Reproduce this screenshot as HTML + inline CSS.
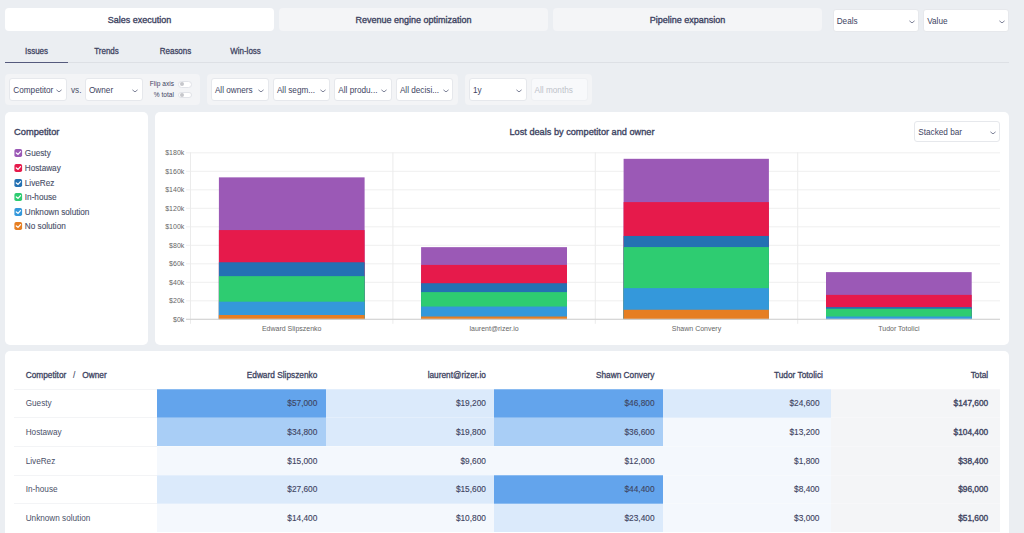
<!DOCTYPE html>
<html><head><meta charset="utf-8">
<style>
*{box-sizing:border-box;margin:0;padding:0}
html,body{width:1024px;height:533px;overflow:hidden;background:#EBEEF2;font-family:"Liberation Sans",sans-serif;color:#3E4462}
.a{position:absolute;white-space:nowrap}
.seg{position:absolute;top:8px;height:23px;width:269px;border-radius:4px;background:#F4F5F7;text-align:center;padding-top:1px;line-height:23px;font-weight:400;font-size:9px;-webkit-text-stroke:0.35px #3E4462;color:#3E4462}
.dd{position:absolute;background:#fff;border:1px solid #E6E8EC;border-radius:3px;font-size:8.2px;color:#3E4462;white-space:nowrap;overflow:hidden}
.dd span{position:absolute;left:3px;top:1.5px}
.chev{position:absolute}
.tab{position:absolute;top:43.2px;height:16px;line-height:16px;font-size:8.7px;transform:scaleX(0.92);font-weight:400;-webkit-text-stroke:0.3px #3E4462;text-align:center;color:#3E4462}
.box{position:absolute;background:#F3F4F6;border-radius:4px}
.card{position:absolute;background:#fff;border-radius:5px}
</style></head><body>
<div class="seg" style="left:5px;background:#fff">Sales execution</div><div class="seg" style="left:279px">Revenue engine optimization</div><div class="seg" style="left:553px">Pipeline expansion</div>
<div class="dd" style="left:832.70px;top:9.20px;width:86.50px;height:22.60px;line-height:20.60px;"><span style="top:1.50px">Deals</span><svg class="chev" style="left:74.90px;top:9.70px" width="6" height="4" viewBox="0 0 6 4"><path d="M0.7 1.1L3 2.9L5.3 1.1" fill="none" stroke="#80859A" stroke-width="1" stroke-linecap="round" stroke-linejoin="round"/></svg></div>
<div class="dd" style="left:923.20px;top:9.20px;width:86.00px;height:22.60px;line-height:20.60px;"><span style="top:1.50px">Value</span><svg class="chev" style="left:74.80px;top:9.70px" width="6" height="4" viewBox="0 0 6 4"><path d="M0.7 1.1L3 2.9L5.3 1.1" fill="none" stroke="#80859A" stroke-width="1" stroke-linecap="round" stroke-linejoin="round"/></svg></div>
<div class="tab" style="left:5px;width:63px">Issues</div><div class="tab" style="left:75px;width:63px">Trends</div><div class="tab" style="left:144px;width:63px">Reasons</div><div class="tab" style="left:214px;width:63px">Win-loss</div><div class="a" style="left:5px;top:62px;width:1004px;height:1px;background:#DDE0E5"></div><div class="a" style="left:5px;top:61.7px;width:63px;height:1.4px;background:#555A7D"></div>
<div class="box" style="left:5px;top:74px;width:195px;height:31px"></div><div class="box" style="left:207px;top:74px;width:251px;height:31px"></div><div class="box" style="left:465px;top:74px;width:127px;height:31px"></div>
<div class="dd" style="left:9.30px;top:77.80px;width:57.40px;height:22.90px;line-height:20.90px;"><span style="top:2.20px">Competitor</span><svg class="chev" style="left:46.20px;top:9.85px" width="6" height="4" viewBox="0 0 6 4"><path d="M0.7 1.1L3 2.9L5.3 1.1" fill="none" stroke="#80859A" stroke-width="1" stroke-linecap="round" stroke-linejoin="round"/></svg></div>
<div class="a" style="left:71px;top:80px;height:21.5px;line-height:21.5px;font-size:8.2px;color:#4A5068">vs.</div>
<div class="dd" style="left:85.00px;top:77.80px;width:57.90px;height:22.90px;line-height:20.90px;"><span style="top:2.20px">Owner</span><svg class="chev" style="left:46.40px;top:9.85px" width="6" height="4" viewBox="0 0 6 4"><path d="M0.7 1.1L3 2.9L5.3 1.1" fill="none" stroke="#80859A" stroke-width="1" stroke-linecap="round" stroke-linejoin="round"/></svg></div>
<div class="a" style="left:140px;width:34px;text-align:right;top:80.3px;height:8px;line-height:8px;font-size:6.6px">Flip axis</div>
<div class="a" style="left:140px;width:34px;text-align:right;top:90.8px;height:8px;line-height:8px;font-size:6.6px">% total</div>
<div class="a" style="left:178px;top:81px;width:13.5px;height:6.5px;border-radius:4px;background:#fff;border:0.7px solid #E1E3E8"></div><div class="a" style="left:179.6px;top:82px;width:4.4px;height:4.4px;border-radius:50%;background:#C6C7CB"></div>
<div class="a" style="left:178px;top:91.5px;width:13.5px;height:6.5px;border-radius:4px;background:#fff;border:0.7px solid #E1E3E8"></div><div class="a" style="left:179.6px;top:92.5px;width:4.4px;height:4.4px;border-radius:50%;background:#C6C7CB"></div>
<div class="dd" style="left:210.90px;top:77.80px;width:57.80px;height:22.90px;line-height:20.90px;"><span style="top:2.20px">All owners</span><svg class="chev" style="left:46.40px;top:9.85px" width="6" height="4" viewBox="0 0 6 4"><path d="M0.7 1.1L3 2.9L5.3 1.1" fill="none" stroke="#80859A" stroke-width="1" stroke-linecap="round" stroke-linejoin="round"/></svg></div>
<div class="dd" style="left:272.90px;top:77.80px;width:57.10px;height:22.90px;line-height:20.90px;"><span style="top:2.20px">All segm...</span><svg class="chev" style="left:45.80px;top:9.85px" width="6" height="4" viewBox="0 0 6 4"><path d="M0.7 1.1L3 2.9L5.3 1.1" fill="none" stroke="#80859A" stroke-width="1" stroke-linecap="round" stroke-linejoin="round"/></svg></div>
<div class="dd" style="left:334.30px;top:77.80px;width:57.50px;height:22.90px;line-height:20.90px;"><span style="top:2.20px">All produ...</span><svg class="chev" style="left:46.20px;top:9.85px" width="6" height="4" viewBox="0 0 6 4"><path d="M0.7 1.1L3 2.9L5.3 1.1" fill="none" stroke="#80859A" stroke-width="1" stroke-linecap="round" stroke-linejoin="round"/></svg></div>
<div class="dd" style="left:395.90px;top:77.80px;width:57.60px;height:22.90px;line-height:20.90px;"><span style="top:2.20px">All decisi...</span><svg class="chev" style="left:46.10px;top:9.85px" width="6" height="4" viewBox="0 0 6 4"><path d="M0.7 1.1L3 2.9L5.3 1.1" fill="none" stroke="#80859A" stroke-width="1" stroke-linecap="round" stroke-linejoin="round"/></svg></div>
<div class="dd" style="left:468.90px;top:77.80px;width:57.70px;height:22.90px;line-height:20.90px;"><span style="top:2.20px">1y</span><svg class="chev" style="left:46.00px;top:9.85px" width="6" height="4" viewBox="0 0 6 4"><path d="M0.7 1.1L3 2.9L5.3 1.1" fill="none" stroke="#80859A" stroke-width="1" stroke-linecap="round" stroke-linejoin="round"/></svg></div>
<div class="dd" style="left:530.60px;top:77.80px;width:57.50px;height:22.90px;line-height:20.90px;background:#F8F9FB;color:#BEC2CA;border-color:#EEF0F3"><span style="top:2.20px">All months</span></div>
<div class="card" style="left:5px;top:112px;width:143px;height:233px"></div>
<div class="card" style="left:155px;top:112px;width:854px;height:233px"></div>
<div class="card" style="left:5px;top:351px;width:1004px;height:200px"></div>
<div class="a" style="left:14px;top:126px;height:12px;line-height:12px;font-size:9.3px;font-weight:400;-webkit-text-stroke:0.35px #3E4462;color:#3E4462">Competitor</div>
<svg class="a" style="left:0;top:148.30px" width="30" height="10" viewBox="0 148.30 30 10"><rect x="14.4" y="149.35" width="7.7" height="7.9" rx="1.8" fill="#9B59B6"/><path d="M16.3 153.25L18 154.65L20.5 151.95" fill="none" stroke="#fff" stroke-width="1.3" stroke-linecap="round" stroke-linejoin="round"/></svg><div class="a" style="left:24.8px;top:148.30px;height:12px;line-height:12px;font-size:8.2px;-webkit-text-stroke:0.12px #4A5068;color:#4A5068">Guesty</div>
<svg class="a" style="left:0;top:162.90px" width="30" height="10" viewBox="0 162.90 30 10"><rect x="14.4" y="163.95" width="7.7" height="7.9" rx="1.8" fill="#E61A4B"/><path d="M16.3 167.85L18 169.25L20.5 166.55" fill="none" stroke="#fff" stroke-width="1.3" stroke-linecap="round" stroke-linejoin="round"/></svg><div class="a" style="left:24.8px;top:162.90px;height:12px;line-height:12px;font-size:8.2px;-webkit-text-stroke:0.12px #4A5068;color:#4A5068">Hostaway</div>
<svg class="a" style="left:0;top:177.50px" width="30" height="10" viewBox="0 177.50 30 10"><rect x="14.4" y="178.55" width="7.7" height="7.9" rx="1.8" fill="#2471B3"/><path d="M16.3 182.45L18 183.85L20.5 181.15" fill="none" stroke="#fff" stroke-width="1.3" stroke-linecap="round" stroke-linejoin="round"/></svg><div class="a" style="left:24.8px;top:177.50px;height:12px;line-height:12px;font-size:8.2px;-webkit-text-stroke:0.12px #4A5068;color:#4A5068">LiveRez</div>
<svg class="a" style="left:0;top:192.10px" width="30" height="10" viewBox="0 192.10 30 10"><rect x="14.4" y="193.15" width="7.7" height="7.9" rx="1.8" fill="#2ECC71"/><path d="M16.3 197.05L18 198.45L20.5 195.75" fill="none" stroke="#fff" stroke-width="1.3" stroke-linecap="round" stroke-linejoin="round"/></svg><div class="a" style="left:24.8px;top:192.10px;height:12px;line-height:12px;font-size:8.2px;-webkit-text-stroke:0.12px #4A5068;color:#4A5068">In-house</div>
<svg class="a" style="left:0;top:206.70px" width="30" height="10" viewBox="0 206.70 30 10"><rect x="14.4" y="207.75" width="7.7" height="7.9" rx="1.8" fill="#3498DB"/><path d="M16.3 211.65L18 213.05L20.5 210.35" fill="none" stroke="#fff" stroke-width="1.3" stroke-linecap="round" stroke-linejoin="round"/></svg><div class="a" style="left:24.8px;top:206.70px;height:12px;line-height:12px;font-size:8.2px;-webkit-text-stroke:0.12px #4A5068;color:#4A5068">Unknown solution</div>
<svg class="a" style="left:0;top:221.30px" width="30" height="10" viewBox="0 221.30 30 10"><rect x="14.4" y="222.35" width="7.7" height="7.9" rx="1.8" fill="#E67E22"/><path d="M16.3 226.25L18 227.65L20.5 224.95" fill="none" stroke="#fff" stroke-width="1.3" stroke-linecap="round" stroke-linejoin="round"/></svg><div class="a" style="left:24.8px;top:221.30px;height:12px;line-height:12px;font-size:8.2px;-webkit-text-stroke:0.12px #4A5068;color:#4A5068">No solution</div>
<svg class="a" style="left:0;top:0" width="1024" height="533" viewBox="0 0 1024 533"><rect x="186" y="300.30" width="814" height="1" fill="#EFEFEF"/><rect x="186" y="281.80" width="814" height="1" fill="#EFEFEF"/><rect x="186" y="263.30" width="814" height="1" fill="#EFEFEF"/><rect x="186" y="244.80" width="814" height="1" fill="#EFEFEF"/><rect x="186" y="226.30" width="814" height="1" fill="#EFEFEF"/><rect x="186" y="207.80" width="814" height="1" fill="#EFEFEF"/><rect x="186" y="189.30" width="814" height="1" fill="#EFEFEF"/><rect x="186" y="170.80" width="814" height="1" fill="#EFEFEF"/><rect x="186" y="152.30" width="814" height="1" fill="#EFEFEF"/><rect x="190.00" y="152.3" width="1" height="171.5" fill="#EBEBEB"/><rect x="392.40" y="152.3" width="1" height="171.5" fill="#EBEBEB"/><rect x="594.80" y="152.3" width="1" height="171.5" fill="#EBEBEB"/><rect x="797.20" y="152.3" width="1" height="171.5" fill="#EBEBEB"/><text x="184.3" y="321.70" text-anchor="end" font-size="7" fill="#666">$0k</text><text x="184.3" y="303.20" text-anchor="end" font-size="7" fill="#666">$20k</text><text x="184.3" y="284.70" text-anchor="end" font-size="7" fill="#666">$40k</text><text x="184.3" y="266.20" text-anchor="end" font-size="7" fill="#666">$60k</text><text x="184.3" y="247.70" text-anchor="end" font-size="7" fill="#666">$80k</text><text x="184.3" y="229.20" text-anchor="end" font-size="7" fill="#666">$100k</text><text x="184.3" y="210.70" text-anchor="end" font-size="7" fill="#666">$120k</text><text x="184.3" y="192.20" text-anchor="end" font-size="7" fill="#666">$140k</text><text x="184.3" y="173.70" text-anchor="end" font-size="7" fill="#666">$160k</text><text x="184.3" y="155.20" text-anchor="end" font-size="7" fill="#666">$180k</text><rect x="218.9" y="177.36" width="145.70" height="141.94" fill="#9B59B6"/><rect x="218.9" y="230.08" width="145.70" height="89.22" fill="#E61A4B"/><rect x="218.9" y="262.27" width="145.70" height="57.03" fill="#2471B3"/><rect x="218.9" y="276.15" width="145.70" height="43.15" fill="#2ECC71"/><rect x="218.9" y="301.68" width="145.70" height="17.62" fill="#3498DB"/><rect x="218.9" y="315.00" width="145.70" height="4.30" fill="#E67E22"/><rect x="421.1" y="247.15" width="145.90" height="72.15" fill="#9B59B6"/><rect x="421.1" y="264.91" width="145.90" height="54.39" fill="#E61A4B"/><rect x="421.1" y="283.23" width="145.90" height="36.07" fill="#2471B3"/><rect x="421.1" y="292.11" width="145.90" height="27.19" fill="#2ECC71"/><rect x="421.1" y="306.54" width="145.90" height="12.76" fill="#3498DB"/><rect x="421.1" y="316.53" width="145.90" height="2.77" fill="#E67E22"/><rect x="623.6" y="158.81" width="145.30" height="160.49" fill="#9B59B6"/><rect x="623.6" y="202.10" width="145.30" height="117.20" fill="#E61A4B"/><rect x="623.6" y="235.96" width="145.30" height="83.34" fill="#2471B3"/><rect x="623.6" y="247.06" width="145.30" height="72.24" fill="#2ECC71"/><rect x="623.6" y="288.13" width="145.30" height="31.17" fill="#3498DB"/><rect x="623.6" y="309.77" width="145.30" height="9.53" fill="#E67E22"/><rect x="826" y="272.12" width="145.70" height="47.18" fill="#9B59B6"/><rect x="826" y="294.88" width="145.70" height="24.42" fill="#E61A4B"/><rect x="826" y="307.09" width="145.70" height="12.21" fill="#2471B3"/><rect x="826" y="308.75" width="145.70" height="10.55" fill="#2ECC71"/><rect x="826" y="316.53" width="145.70" height="2.77" fill="#3498DB"/><rect x="186" y="318.70" width="814" height="1.2" fill="#D3D3D3"/><text x="291.70" y="330.8" text-anchor="middle" font-size="7" fill="#666">Edward Slipszenko</text><text x="494.10" y="330.8" text-anchor="middle" font-size="7" fill="#666">laurent@rizer.io</text><text x="696.50" y="330.8" text-anchor="middle" font-size="7" fill="#666">Shawn Convery</text><text x="898.90" y="330.8" text-anchor="middle" font-size="7" fill="#666">Tudor Totolici</text><text x="582" y="135.4" text-anchor="middle" font-size="9.2" stroke="#3E4462" stroke-width="0.35" fill="#3E4462">Lost deals by competitor and owner</text></svg>
<div class="dd" style="left:914.3px;top:120.9px;width:85.6px;height:21.5px;line-height:19.5px"><span style="left:3px">Stacked bar</span><svg class="chev" style="left:74.30px;top:8.90px" width="6" height="4" viewBox="0 0 6 4"><path d="M0.7 1.1L3 2.9L5.3 1.1" fill="none" stroke="#80859A" stroke-width="1" stroke-linecap="round" stroke-linejoin="round"/></svg></div>
<div class="a" style="left:25.7px;top:368.9px;height:12px;line-height:12px;font-size:8.3px;font-weight:400;-webkit-text-stroke:0.3px #3E4462;color:#3E4462">Competitor<span style="display:inline-block;width:16px;text-align:center;-webkit-text-stroke:0.1px #3E4462">/</span>Owner</div>
<div class="a" style="left:117.30px;width:200px;text-align:right;top:368.9px;height:12px;line-height:12px;font-size:8.3px;font-weight:400;-webkit-text-stroke:0.3px #3E4462;color:#3E4462">Edward Slipszenko</div>
<div class="a" style="left:285.90px;width:200px;text-align:right;top:368.9px;height:12px;line-height:12px;font-size:8.3px;font-weight:400;-webkit-text-stroke:0.3px #3E4462;color:#3E4462">laurent@rizer.io</div>
<div class="a" style="left:454.50px;width:200px;text-align:right;top:368.9px;height:12px;line-height:12px;font-size:8.3px;font-weight:400;-webkit-text-stroke:0.3px #3E4462;color:#3E4462">Shawn Convery</div>
<div class="a" style="left:622.90px;width:200px;text-align:right;top:368.9px;height:12px;line-height:12px;font-size:8.3px;font-weight:400;-webkit-text-stroke:0.3px #3E4462;color:#3E4462">Tudor Totolici</div>
<div class="a" style="left:788.20px;width:200px;text-align:right;top:368.9px;height:12px;line-height:12px;font-size:8.3px;font-weight:400;-webkit-text-stroke:0.3px #3E4462;color:#3E4462">Total</div>
<div class="a" style="left:14px;top:388.5px;width:143.2px;height:1px;background:#F3F4F6"></div><div class="a" style="left:157.2px;top:389px;width:168.50px;height:28.70px;background:#63A4EC"></div><div class="a" style="left:325.7px;top:389px;width:168.30px;height:28.70px;background:#DBEAFB"></div><div class="a" style="left:494px;top:389px;width:168.70px;height:28.70px;background:#63A4EC"></div><div class="a" style="left:662.7px;top:389px;width:168.50px;height:28.70px;background:#DBEAFB"></div><div class="a" style="left:831.2px;top:389px;width:168.80px;height:28.70px;background:#F4F5F7"></div><div class="a" style="left:157.2px;top:388.5px;width:842.8px;height:1px;background:rgba(255,255,255,0.25)"></div><div class="a" style="left:25.7px;top:398.35px;height:12px;line-height:12px;font-size:8.2px;color:#4A5068">Guesty</div><div class="a" style="left:217.30px;width:100px;text-align:right;top:397.25px;height:12px;line-height:12px;font-size:8.3px;-webkit-text-stroke:0.12px #3E4462;color:#3E4462">$57,000</div><div class="a" style="left:385.90px;width:100px;text-align:right;top:397.25px;height:12px;line-height:12px;font-size:8.3px;-webkit-text-stroke:0.12px #3E4462;color:#3E4462">$19,200</div><div class="a" style="left:554.50px;width:100px;text-align:right;top:397.25px;height:12px;line-height:12px;font-size:8.3px;-webkit-text-stroke:0.12px #3E4462;color:#3E4462">$46,800</div><div class="a" style="left:719.50px;width:100px;text-align:right;top:397.25px;height:12px;line-height:12px;font-size:8.3px;-webkit-text-stroke:0.12px #3E4462;color:#3E4462">$24,600</div><div class="a" style="left:888.20px;width:100px;text-align:right;top:397.25px;height:12px;line-height:12px;font-size:8.3px;-webkit-text-stroke:0.35px #3E4462;color:#3E4462">$147,600</div>
<div class="a" style="left:14px;top:417.2px;width:143.2px;height:1px;background:#F3F4F6"></div><div class="a" style="left:157.2px;top:417.7px;width:168.50px;height:28.70px;background:#A9CEF6"></div><div class="a" style="left:325.7px;top:417.7px;width:168.30px;height:28.70px;background:#DBEAFB"></div><div class="a" style="left:494px;top:417.7px;width:168.70px;height:28.70px;background:#A9CEF6"></div><div class="a" style="left:662.7px;top:417.7px;width:168.50px;height:28.70px;background:#F4F8FD"></div><div class="a" style="left:831.2px;top:417.7px;width:168.80px;height:28.70px;background:#F4F5F7"></div><div class="a" style="left:157.2px;top:417.2px;width:842.8px;height:1px;background:rgba(255,255,255,0.25)"></div><div class="a" style="left:25.7px;top:427.05px;height:12px;line-height:12px;font-size:8.2px;color:#4A5068">Hostaway</div><div class="a" style="left:217.30px;width:100px;text-align:right;top:425.95px;height:12px;line-height:12px;font-size:8.3px;-webkit-text-stroke:0.12px #3E4462;color:#3E4462">$34,800</div><div class="a" style="left:385.90px;width:100px;text-align:right;top:425.95px;height:12px;line-height:12px;font-size:8.3px;-webkit-text-stroke:0.12px #3E4462;color:#3E4462">$19,800</div><div class="a" style="left:554.50px;width:100px;text-align:right;top:425.95px;height:12px;line-height:12px;font-size:8.3px;-webkit-text-stroke:0.12px #3E4462;color:#3E4462">$36,600</div><div class="a" style="left:719.50px;width:100px;text-align:right;top:425.95px;height:12px;line-height:12px;font-size:8.3px;-webkit-text-stroke:0.12px #3E4462;color:#3E4462">$13,200</div><div class="a" style="left:888.20px;width:100px;text-align:right;top:425.95px;height:12px;line-height:12px;font-size:8.3px;-webkit-text-stroke:0.35px #3E4462;color:#3E4462">$104,400</div>
<div class="a" style="left:14px;top:445.9px;width:143.2px;height:1px;background:#F3F4F6"></div><div class="a" style="left:157.2px;top:446.4px;width:168.50px;height:28.70px;background:#F4F8FD"></div><div class="a" style="left:325.7px;top:446.4px;width:168.30px;height:28.70px;background:#F4F8FD"></div><div class="a" style="left:494px;top:446.4px;width:168.70px;height:28.70px;background:#F4F8FD"></div><div class="a" style="left:662.7px;top:446.4px;width:168.50px;height:28.70px;background:#F4F8FD"></div><div class="a" style="left:831.2px;top:446.4px;width:168.80px;height:28.70px;background:#F4F5F7"></div><div class="a" style="left:157.2px;top:445.9px;width:842.8px;height:1px;background:rgba(255,255,255,0.25)"></div><div class="a" style="left:25.7px;top:455.75px;height:12px;line-height:12px;font-size:8.2px;color:#4A5068">LiveRez</div><div class="a" style="left:217.30px;width:100px;text-align:right;top:454.65px;height:12px;line-height:12px;font-size:8.3px;-webkit-text-stroke:0.12px #3E4462;color:#3E4462">$15,000</div><div class="a" style="left:385.90px;width:100px;text-align:right;top:454.65px;height:12px;line-height:12px;font-size:8.3px;-webkit-text-stroke:0.12px #3E4462;color:#3E4462">$9,600</div><div class="a" style="left:554.50px;width:100px;text-align:right;top:454.65px;height:12px;line-height:12px;font-size:8.3px;-webkit-text-stroke:0.12px #3E4462;color:#3E4462">$12,000</div><div class="a" style="left:719.50px;width:100px;text-align:right;top:454.65px;height:12px;line-height:12px;font-size:8.3px;-webkit-text-stroke:0.12px #3E4462;color:#3E4462">$1,800</div><div class="a" style="left:888.20px;width:100px;text-align:right;top:454.65px;height:12px;line-height:12px;font-size:8.3px;-webkit-text-stroke:0.35px #3E4462;color:#3E4462">$38,400</div>
<div class="a" style="left:14px;top:474.6px;width:143.2px;height:1px;background:#F3F4F6"></div><div class="a" style="left:157.2px;top:475.1px;width:168.50px;height:28.70px;background:#DBEAFB"></div><div class="a" style="left:325.7px;top:475.1px;width:168.30px;height:28.70px;background:#DBEAFB"></div><div class="a" style="left:494px;top:475.1px;width:168.70px;height:28.70px;background:#63A4EC"></div><div class="a" style="left:662.7px;top:475.1px;width:168.50px;height:28.70px;background:#F4F8FD"></div><div class="a" style="left:831.2px;top:475.1px;width:168.80px;height:28.70px;background:#F4F5F7"></div><div class="a" style="left:157.2px;top:474.6px;width:842.8px;height:1px;background:rgba(255,255,255,0.25)"></div><div class="a" style="left:25.7px;top:484.45px;height:12px;line-height:12px;font-size:8.2px;color:#4A5068">In-house</div><div class="a" style="left:217.30px;width:100px;text-align:right;top:483.35px;height:12px;line-height:12px;font-size:8.3px;-webkit-text-stroke:0.12px #3E4462;color:#3E4462">$27,600</div><div class="a" style="left:385.90px;width:100px;text-align:right;top:483.35px;height:12px;line-height:12px;font-size:8.3px;-webkit-text-stroke:0.12px #3E4462;color:#3E4462">$15,600</div><div class="a" style="left:554.50px;width:100px;text-align:right;top:483.35px;height:12px;line-height:12px;font-size:8.3px;-webkit-text-stroke:0.12px #3E4462;color:#3E4462">$44,400</div><div class="a" style="left:719.50px;width:100px;text-align:right;top:483.35px;height:12px;line-height:12px;font-size:8.3px;-webkit-text-stroke:0.12px #3E4462;color:#3E4462">$8,400</div><div class="a" style="left:888.20px;width:100px;text-align:right;top:483.35px;height:12px;line-height:12px;font-size:8.3px;-webkit-text-stroke:0.35px #3E4462;color:#3E4462">$96,000</div>
<div class="a" style="left:14px;top:503.3px;width:143.2px;height:1px;background:#F3F4F6"></div><div class="a" style="left:157.2px;top:503.8px;width:168.50px;height:28.70px;background:#F4F8FD"></div><div class="a" style="left:325.7px;top:503.8px;width:168.30px;height:28.70px;background:#F4F8FD"></div><div class="a" style="left:494px;top:503.8px;width:168.70px;height:28.70px;background:#DBEAFB"></div><div class="a" style="left:662.7px;top:503.8px;width:168.50px;height:28.70px;background:#F4F8FD"></div><div class="a" style="left:831.2px;top:503.8px;width:168.80px;height:28.70px;background:#F4F5F7"></div><div class="a" style="left:157.2px;top:503.3px;width:842.8px;height:1px;background:rgba(255,255,255,0.25)"></div><div class="a" style="left:25.7px;top:513.15px;height:12px;line-height:12px;font-size:8.2px;color:#4A5068">Unknown solution</div><div class="a" style="left:217.30px;width:100px;text-align:right;top:512.05px;height:12px;line-height:12px;font-size:8.3px;-webkit-text-stroke:0.12px #3E4462;color:#3E4462">$14,400</div><div class="a" style="left:385.90px;width:100px;text-align:right;top:512.05px;height:12px;line-height:12px;font-size:8.3px;-webkit-text-stroke:0.12px #3E4462;color:#3E4462">$10,800</div><div class="a" style="left:554.50px;width:100px;text-align:right;top:512.05px;height:12px;line-height:12px;font-size:8.3px;-webkit-text-stroke:0.12px #3E4462;color:#3E4462">$23,400</div><div class="a" style="left:719.50px;width:100px;text-align:right;top:512.05px;height:12px;line-height:12px;font-size:8.3px;-webkit-text-stroke:0.12px #3E4462;color:#3E4462">$3,000</div><div class="a" style="left:888.20px;width:100px;text-align:right;top:512.05px;height:12px;line-height:12px;font-size:8.3px;-webkit-text-stroke:0.35px #3E4462;color:#3E4462">$51,600</div>

</body></html>
